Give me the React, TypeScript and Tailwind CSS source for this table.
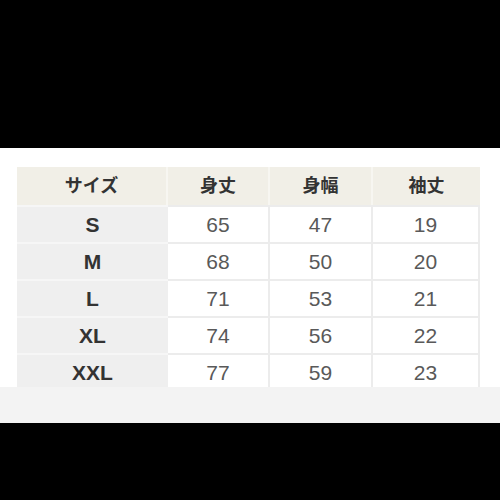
import React from "react";

const rows = [
    {size: "S", length: 65, width: 47, sleeve: 19},
    {size: "M", length: 68, width: 50, sleeve: 20},
    {size: "L", length: 71, width: 53, sleeve: 21},
    {size: "XL", length: 74, width: 56, sleeve: 22},
    {size: "XXL", length: 77, width: 59, sleeve: 23},
];

const font = {fontFamily: '"Liberation Sans", "Noto Sans CJK JP", sans-serif'};

export default function App() {
    return (
        <div className="w-[500px] h-[500px] flex flex-col bg-black" style={font}>
            <div className="h-[148px] bg-black"/>
            <div className="h-[239px] bg-white pl-[17px] pt-[19px] overflow-hidden">
                <div className="w-[463px]">
                    <div className="grid grid-cols-[151px_102px_103px_107px] h-[38px] bg-[#f1efe7] text-[18px] font-bold text-[#333]">
                        <div className="flex items-center justify-center border-r-2 border-[#f7f6f1]">サイズ</div>
                        <div className="flex items-center justify-center border-r-2 border-[#f7f6f1]">身丈</div>
                        <div className="flex items-center justify-center border-r-2 border-[#f7f6f1]">身幅</div>
                        <div className="flex items-center justify-center">袖丈</div>
                    </div>
                    {rows.map(r =>
                        <div key={r.size} className="grid grid-cols-[151px_102px_103px_107px] h-[37px] text-[21px]">
                            <div className="flex items-center justify-center bg-[#efefef] border-t-2 border-[#f6f6f6] font-bold text-[#333]">
                                {r.size}
                            </div>
                            <div className="flex items-center justify-center bg-white border-t-2 border-r-2 border-[#ececec] text-[#595959]">
                                {r.length}
                            </div>
                            <div className="flex items-center justify-center bg-white border-t-2 border-r-2 border-[#ececec] text-[#595959]">
                                {r.width}
                            </div>
                            <div className="flex items-center justify-center bg-white border-t-2 border-r-2 border-[#ececec] text-[#595959]">
                                {r.sleeve}
                            </div>
                        </div>
                    )}
                </div>
            </div>
            <div className="h-[36px] bg-[#f3f3f3]"/>
            <div className="flex-1 bg-black"/>
        </div>
    );
}
